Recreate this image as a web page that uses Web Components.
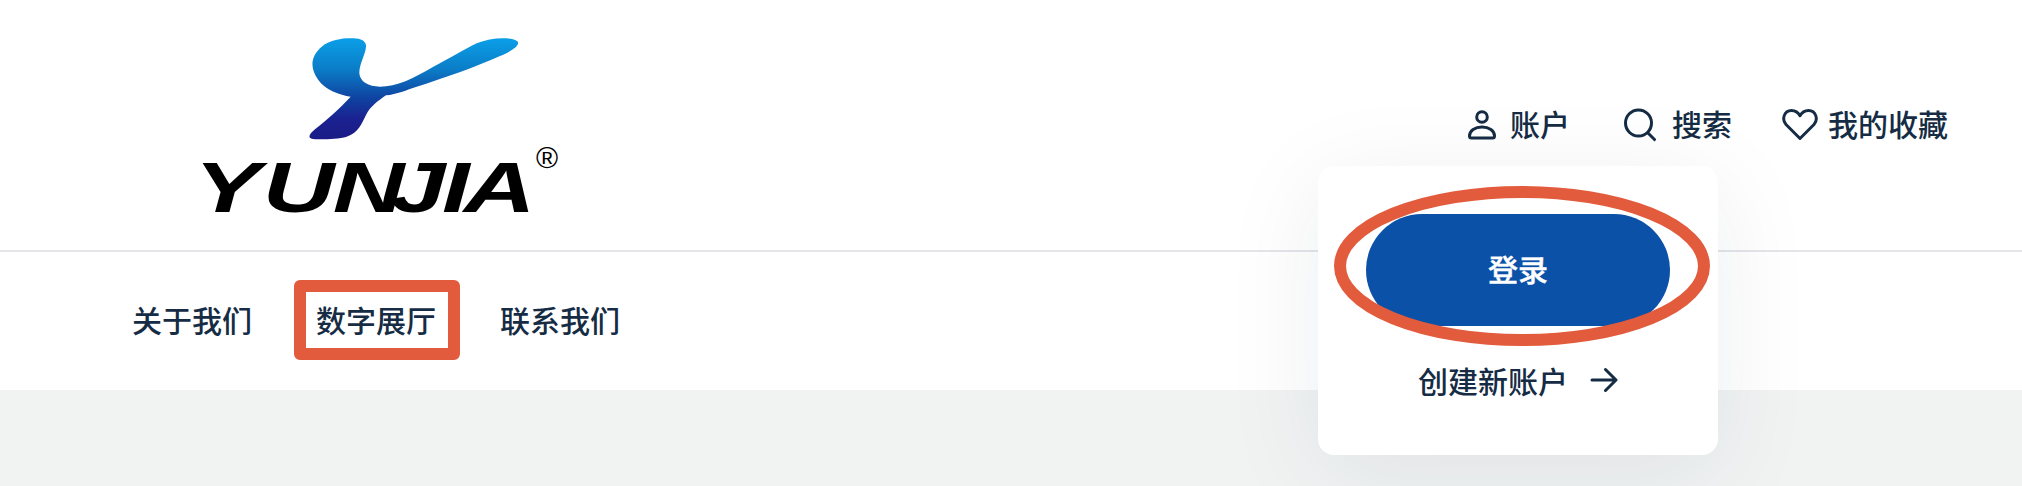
<!DOCTYPE html>
<html lang="zh">
<head>
<meta charset="utf-8">
<title>YUNJIA</title>
<style>
html,body{margin:0;padding:0;height:100%;background:#f1f3f3;overflow:hidden}
body{font-family:"Noto Sans CJK SC","Noto Sans",sans-serif;color:#152c44}
</style>
</head>
<body>
<site-header>
  <yunjia-logo slot="logo"></yunjia-logo>
  <tool-link slot="tools" gap="12" label="账户">
    <svg slot="icon" width="32" height="32" viewBox="0 0 32 32" fill="none" stroke="#152c44" stroke-width="3" stroke-linejoin="round"><circle cx="16" cy="8" r="5.3"/><path d="M3.500 27C3.500 21.500 9 18 16 18S28.500 21.500 28.500 27Q28.500 29 26.500 29H5.500Q3.500 29 3.500 27Z"/></svg>
  </tool-link>
  <tool-link slot="tools" gap="16" label="搜索">
    <svg slot="icon" width="36" height="36" viewBox="0 0 36 36" fill="none" stroke="#152c44" stroke-width="3" stroke-linecap="square"><circle cx="18.500" cy="16" r="13"/><path d="M28 26L34.500 32.500"/></svg>
  </tool-link>
  <tool-link slot="tools" gap="10" label="我的收藏">
    <svg slot="icon" width="36" height="36" viewBox="0 0 36 36" fill="none" stroke="#152c44" stroke-width="3" stroke-linejoin="round"><path d="M18 31.500L4 17.500C-.5 12.500 2 3.500 9.500 3.500C13.500 3.500 16.200 5.500 18 8.800C19.800 5.500 22.500 3.500 26.500 3.500C34 3.500 36.500 12.500 32 17.500Z"/></svg>
  </tool-link>
  <nav-link slot="nav">关于我们</nav-link>
  <nav-link slot="nav" marked>数字展厅</nav-link>
  <nav-link slot="nav">联系我们</nav-link>
  <login-card slot="overlay"></login-card>
</site-header>

<script>
function shadow(el, html){ el.attachShadow({mode:'open'}).innerHTML = html; return el.shadowRoot; }

class SiteHeader extends HTMLElement{
  connectedCallback(){
    if(this.shadowRoot) return;
    shadow(this, `<style>
      :host{display:block;position:relative;height:486px;background:#f1f3f3}
      .top{display:flex;justify-content:space-between;align-items:center;height:250px;padding:0 74px 0 180px;background:#fff;border-bottom:2px solid #e5e5ea}
      .tools{display:flex;align-items:center;gap:50px}
      .nav{display:flex;align-items:center;gap:64px;height:134px;padding:0 0 4px 132px;background:#fff}
    </style>
    <div class="top"><slot name="logo"></slot><div class="tools"><slot name="tools"></slot></div></div>
    <div class="nav"><slot name="nav"></slot></div>
    <slot name="overlay"></slot>`);
  }
}
class YunjiaLogo extends HTMLElement{
  connectedCallback(){
    if(this.shadowRoot) return;
    shadow(this, `<style>
      :host{display:block;width:400px;height:220px}
      svg{display:block}
    </style>
    <svg width="400" height="220" viewBox="180 15 400 220">
      <defs><linearGradient id="g" x1="0" y1="0" x2="0" y2="1">
        <stop offset="0" stop-color="#0a9fe8"/><stop offset=".3" stop-color="#0b7ec8"/><stop offset=".6" stop-color="#0f42a0"/><stop offset=".8" stop-color="#1a2190"/><stop offset="1" stop-color="#1b1c86"/>
      </linearGradient></defs>
      <g transform="translate(300 30) scale(.3333)">
        <path fill="url(#g)" d="M150 25C180 22 200 32 198 50C196 75 178 100 178 130C180 155 205 170 240 170C290 170 340 145 400 110C450 85 490 60 530 40C570 22 630 20 650 32C665 42 640 62 600 78C530 110 430 145 350 170C320 180 290 193 258 196C235 212 210 230 198 255C185 280 175 310 140 320C110 328 50 330 35 326C22 322 30 310 45 298C80 270 120 235 152 200C120 195 75 180 55 150C30 115 30 80 65 50C90 30 125 25 150 25Z"/>
      </g>
      <text transform="translate(190 212) scale(1.4 1)" x="3 52 102 143 180 195.500" font-family="Liberation Sans" font-weight="700" font-style="italic" font-size="71" fill="#000">YUNJIA</text>
      <text x="536" y="168" font-family="Liberation Sans" font-size="30" fill="#000">®</text>
    </svg>`);
  }
}
class ToolLink extends HTMLElement{
  connectedCallback(){
    if(this.shadowRoot) return;
    const gap=this.getAttribute('gap')||'12', label=this.getAttribute('label')||'';
    shadow(this, `<style>
      :host{display:flex;align-items:center;gap:${gap}px;font-size:30px;line-height:40px;font-weight:500;color:#152c44}
      ::slotted(svg){display:block}
      span{margin-bottom:5px}
    </style><slot name="icon"></slot><span>${label}</span>`);
  }
}
class NavLink extends HTMLElement{
  connectedCallback(){
    if(this.shadowRoot) return;
    const mark=this.hasAttribute('marked');
    shadow(this, `<style>
      :host{display:block;position:relative;font-size:30px;line-height:40px;font-weight:500;color:#152c44}
      .mark{position:absolute;left:-22px;right:-24px;top:-19px;height:80px;box-sizing:border-box;border:12px solid #e25b3c;border-radius:6px}
    </style><slot></slot>${mark?'<div class="mark"></div>':''}`);
  }
}
class LoginCard extends HTMLElement{
  connectedCallback(){
    if(this.shadowRoot) return;
    shadow(this, `<style>
      :host{display:block;position:absolute;left:1318px;top:166px;width:400px;height:289px;background:#fff;border-radius:16px;box-shadow:0 20px 100px rgba(20,40,60,.08)}
      .body{display:flex;flex-direction:column;align-items:center;padding-top:48px}
      .btn{box-sizing:border-box;width:304px;height:112px;padding-bottom:5px;border-radius:56px;background:#0b51a8;color:#fff;display:flex;align-items:center;justify-content:center;font-size:30px;font-weight:500;-webkit-text-stroke:.4px #fff;line-height:40px}
      .link{display:flex;align-items:center;gap:22px;margin-top:32px;height:44px;font-size:30px;font-weight:500;line-height:44px;color:#152c44}
      svg.ring{position:absolute;left:16px;top:20px;overflow:visible}
    </style>
    <div class="body">
      <div class="btn">登录</div>
      <div class="link"><span>创建新账户</span>
        <svg width="28" height="26" viewBox="0 0 28 26" fill="none" stroke="#152c44" stroke-width="3" stroke-linecap="round" stroke-linejoin="round"><path d="M2 13H26M15.500 2.500L26 13L15.500 23.500"/></svg>
      </div>
    </div>
    <svg class="ring" width="376" height="160" viewBox="0 0 376 160" fill="none"><ellipse cx="188" cy="80" rx="182" ry="74" stroke="#e25b3c" stroke-width="12"/></svg>`);
  }
}
customElements.define('site-header',SiteHeader);
customElements.define('yunjia-logo',YunjiaLogo);
customElements.define('tool-link',ToolLink);
customElements.define('nav-link',NavLink);
customElements.define('login-card',LoginCard);
</script>
</body>
</html>
